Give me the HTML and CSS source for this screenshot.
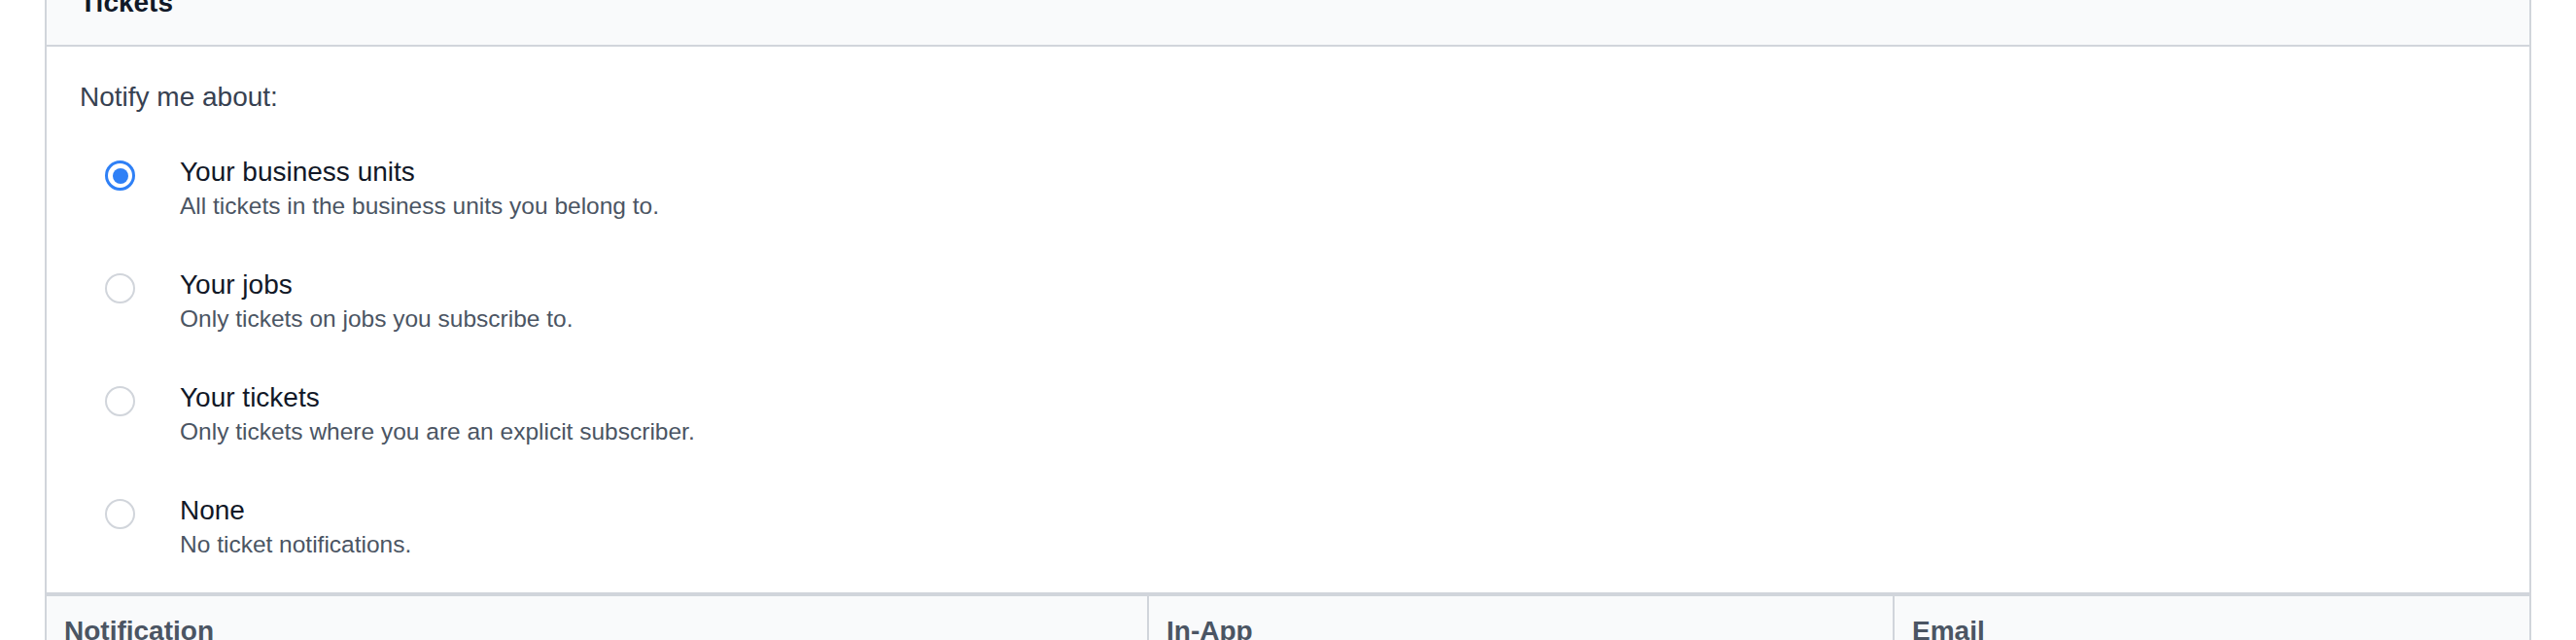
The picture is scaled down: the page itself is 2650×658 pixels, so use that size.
FILE: index.html
```html
<!DOCTYPE html>
<html lang="en">
<head>
<meta charset="utf-8">
<title>Tickets notifications</title>
<link rel="stylesheet" href="styles.css">
</head>
<body>
<div class="card">
  <div class="card-header">Tickets</div>
  <div class="card-body">
    <div class="prompt">Notify me about:</div>
    <div class="options">
      <label class="option">
        <span class="radio checked"></span>
        <span class="option-text">
          <span class="option-title">Your business units</span>
          <span class="option-desc">All tickets in the business units you belong to.</span>
        </span>
      </label>
      <label class="option">
        <span class="radio"></span>
        <span class="option-text">
          <span class="option-title">Your jobs</span>
          <span class="option-desc">Only tickets on jobs you subscribe to.</span>
        </span>
      </label>
      <label class="option">
        <span class="radio"></span>
        <span class="option-text">
          <span class="option-title">Your tickets</span>
          <span class="option-desc">Only tickets where you are an explicit subscriber.</span>
        </span>
      </label>
      <label class="option">
        <span class="radio"></span>
        <span class="option-text">
          <span class="option-title">None</span>
          <span class="option-desc">No ticket notifications.</span>
        </span>
      </label>
    </div>
  </div>
  <div class="table-head">
    <div class="th">Notification</div>
    <div class="th">In-App</div>
    <div class="th">Email</div>
  </div>
</div>
</body>
</html>
```
FILE: styles.css
```css
html, body {
  margin: 0;
  padding: 0;
  background: #ffffff;
  overflow: hidden;
}
body {
  font-family: "Liberation Sans", Arial, sans-serif;
  color: #111827;
}
.card {
  margin-top: -42px;
  margin-left: 46px;
  width: 2558px;
  box-sizing: border-box;
  border: 2px solid #d1d5db;
  background: #ffffff;
}
.card-header {
  background: #f9fafb;
  border-bottom: 2px solid #d1d5db;
  padding: 22px 34px 22px 34px;
  font-size: 28px;
  line-height: 42px;
  font-weight: 700;
  color: #111827;
}
.card-body {
  padding: 31px 34px 33px 34px;
}
.prompt {
  font-size: 28px;
  line-height: 42px;
  color: #374151;
}
.options {
  display: flex;
  flex-direction: column;
  gap: 46px;
  margin-top: 37px;
  padding-left: 26px;
}
.option {
  display: flex;
  align-items: flex-start;
  gap: 46px;
}
.radio {
  flex: none;
  box-sizing: border-box;
  width: 31px;
  height: 31px;
  margin-top: 7px;
  border-radius: 50%;
  border: 2px solid #d1d5db;
  background: #ffffff;
  display: flex;
  align-items: center;
  justify-content: center;
}
.radio.checked {
  border: 3px solid #2f80f6;
}
.radio.checked::after {
  content: "";
  width: 16px;
  height: 16px;
  border-radius: 50%;
  background: #2f80f6;
}
.option-text {
  display: flex;
  flex-direction: column;
}
.option-title {
  font-size: 28px;
  line-height: 38px;
  color: #111827;
}
.option-desc {
  font-size: 24.5px;
  line-height: 32px;
  color: #4b5563;
}
.table-head {
  display: grid;
  grid-template-columns: 1132px 767px 1fr;
  background: #f9fafb;
  border-top: 4px solid #d1d5db;
}
.th {
  padding: 15px 18px 20px 18px;
  font-size: 28px;
  line-height: 42px;
  font-weight: 700;
  color: #4b5563;
}
.th + .th {
  border-left: 2px solid #d1d5db;
}
```
